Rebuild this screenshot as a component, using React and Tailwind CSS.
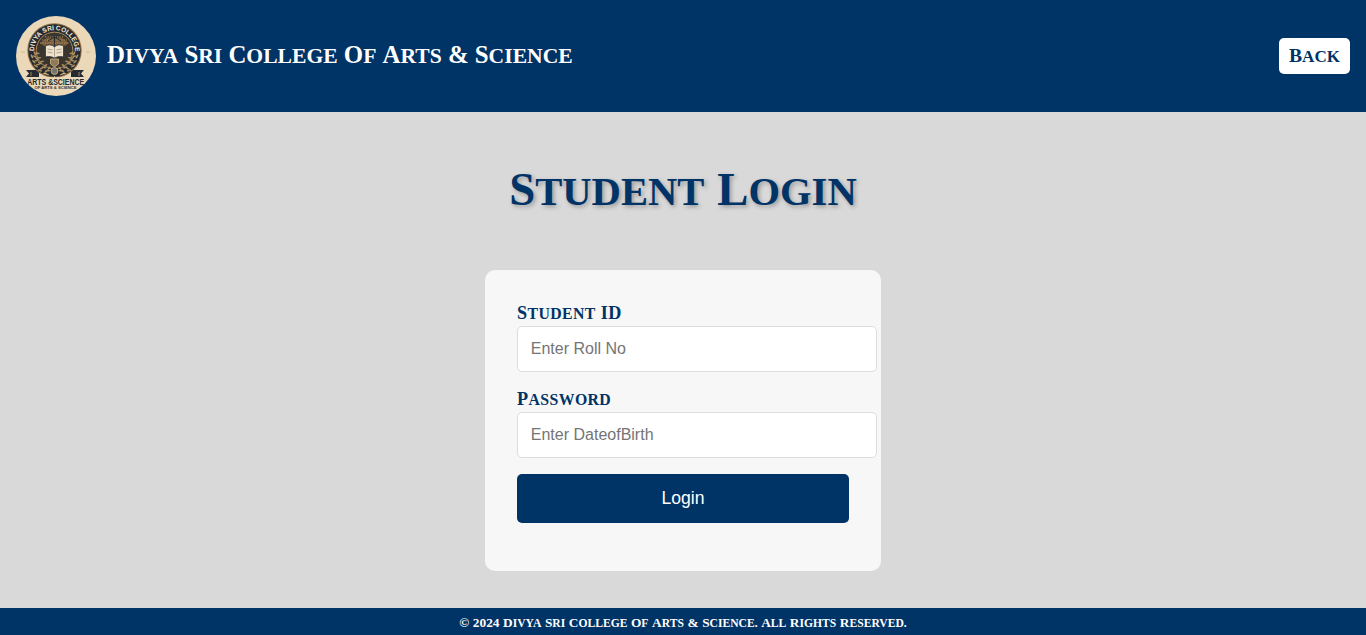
function Caps({ text, className, wordClass }) {
  return (
    <span className={`flex items-baseline whitespace-nowrap font-['Liberation_Serif',serif] font-bold uppercase ${className}`}>
      {text.split(" ").map((word, i) => (
        <span key={i} className={/^[a-z]+[.]?$/i.test(word) && word !== "ID" ? `block ${wordClass}` : "block text-[1.15em]"}>
          {word}
        </span>
      ))}
    </span>
  );
}

function Laurel({ flip }) {
  const leaves = [[17, 41, 60], [19, 46, 45], [21, 50, 30], [25, 54, 15], [30, 57, 0], [20, 38, 60], [22, 43, 45], [25, 47, 30], [29, 51, 15], [33, 54, 0]];
  return (
    <g transform={flip ? "translate(77 0) scale(-1 1)" : undefined} fill="#b0905f">
      {leaves.map(([x, y, r], i) => (
        <g key={i} transform={`translate(${x} ${y}) rotate(${r})`}>
          <ellipse cx="-1" cy="0.6" rx="2.3" ry=".9" />
          <ellipse cx="1.4" cy="-1.2" rx="2" ry=".8" transform="rotate(-45)" />
        </g>
      ))}
    </g>
  );
}

function Crest() {
  return (
    <svg viewBox="0 0 80 80" className="size-20 shrink-0 overflow-visible" role="img" aria-label="College crest">
      <circle cx="40" cy="40" r="40" fill="#ead8b8" />
      <path d="M10 54h13v7H10l3-3.5zM68 54H55v7h13l-3-3.5z" fill="#252b32" />
      <path d="M15 56v4M63 56v4" stroke="#a48457" />
      <circle cx="38.5" cy="34.5" r="27.2" fill="#8e7048" />
      <circle cx="38.5" cy="34.5" r="26.2" fill="#252a31" />
      <circle cx="38.5" cy="34.5" r="18.3" fill="#39352f" stroke="#b18c5b" strokeWidth="1" />
      <path id="crest-ring" d="M18.6 38.5A20.3 20.3 0 1 1 58.4 38.5" fill="none" />
      <text fill="#f7ecd8" fontFamily="Liberation Sans, sans-serif" fontSize="6.8" fontWeight="bold" textLength="65" lengthAdjust="spacingAndGlyphs">
        <textPath href="#crest-ring" startOffset="3.4" textLength="65" lengthAdjust="spacingAndGlyphs">DIVYA SRI COLLEGE</textPath>
      </text>
      <path d="M24 27l7-5h15l7 5-4 3H28z" fill="#765c3c" />
      <path d="M26 24h25M24 27h29M29 21h19" stroke="#b18c5b" strokeWidth="1" strokeDasharray="1.4 1" />
      <path d="M38.5 19v11M32 25l6.5-4 6.5 4" stroke="#252a31" fill="none" />
      <path d="M29.5 30c4-2 7-1 9 1 2-2 5-3 9-1v11c-4-1-7 0-9 1-2-1-5-2-9-1z" fill="#efe3cd" stroke="#252a31" strokeWidth=".7" />
      <path d="M38.5 31v11M31.5 33l5 1M31.5 36l5 1M40.5 34l5-1M40.5 37l5-1" stroke="#908673" strokeWidth=".7" fill="none" />
      <Laurel />
      <Laurel flip />
      <path d="M34.5 43h8v5l-4 3-4-3z" fill="#8c795e" stroke="#d1b17b" strokeWidth=".8" />
      <circle cx="38.5" cy="55" r="3.4" fill="#77736a" stroke="#d1b17b" strokeWidth=".9" />
      <path d="M28 57l5 2M49 57l-5 2M38.5 60v2" stroke="#d1b17b" />
      <path d="M5 36h4M70 36h4" stroke="#c9b188" strokeWidth=".8" />
      <path d="M13 61.2H67L63 70H17z" fill="#ead8b8" />
      <text x="39.7" y="69" textAnchor="middle" fill="#202a32" fontFamily="Liberation Sans, sans-serif" fontSize="9.6" fontWeight="bold" textLength="57" lengthAdjust="spacingAndGlyphs">ARTS &amp;SCIENCE</text>
      <text x="39.5" y="73.4" textAnchor="middle" fill="#303437" fontFamily="Liberation Sans, sans-serif" fontSize="4" fontWeight="bold" textLength="42" lengthAdjust="spacingAndGlyphs">OF ARTS &amp; SCIENCE</text>
    </svg>
  );
}

function Field({ label, placeholder, type }) {
  return (
    <label className="mb-4 block">
      <Caps text={label} className="-mt-px h-[25px] gap-[5px] text-[15.8px] leading-6 tracking-[0.4px]" wordClass="first-letter:text-[1.15em]" />
      <input type={type} placeholder={placeholder} className="block h-[46px] w-[360px] rounded-[5px] border border-[#ddd] bg-white px-[12.8px] text-base outline-none placeholder:text-[#757575]" />
    </label>
  );
}

export default function App() {
  return (
    <div className="flex h-[635px] flex-col bg-[#d9d9d9] font-['Liberation_Sans',sans-serif] text-[#003366]">
      <header className="flex h-28 shrink-0 items-center justify-between bg-[#003366] px-4 text-white">
        <div className="flex items-center gap-[11px]">
          <Crest />
          <Caps text="Divya Sri College Of Arts & Science" className="mb-0.5 gap-[6.1px] text-[21.6px] leading-8 tracking-[0.03px]" wordClass="first-letter:text-[1.15em]" />
        </div>
        <button className="flex h-9 w-[71px] items-center justify-center rounded-[5px] bg-white text-[#003366]">
          <Caps text="Back" className="mb-px text-[17.1px] leading-6" wordClass="first-letter:text-[1.15em]" />
        </button>
      </header>
      <main className="flex flex-1 flex-col items-center">
        <h1 className="mt-[45px] h-16">
          <Caps text="Student Login" className="gap-[13px] text-[40.6px] leading-[64px] [text-shadow:2px_2px_4px_rgba(0,0,0,0.3)]" wordClass="first-letter:text-[1.15em]" />
        </h1>
        <form className="mt-[49px] h-[301px] w-[396px] rounded-[10px] bg-[#f7f7f7] px-8 pt-8">
          <Field label="Student ID" placeholder="Enter Roll No" type="text" />
          <Field label="Password" placeholder="Enter DateofBirth" type="password" />
          <button type="button" className="h-[49px] w-full rounded-[5px] bg-[#003366] text-[17.6px] text-white">Login</button>
        </form>
      </main>
      <footer className="flex h-[27px] shrink-0 items-center justify-center bg-[#003366] text-white">
        <Caps text="© 2024 Divya Sri College Of Arts & Science. All Rights Reserved." className="mt-[3px] gap-[3.6px] text-[11.6px] leading-5" wordClass="first-letter:text-[1.15em]" />
      </footer>
    </div>
  );
}
